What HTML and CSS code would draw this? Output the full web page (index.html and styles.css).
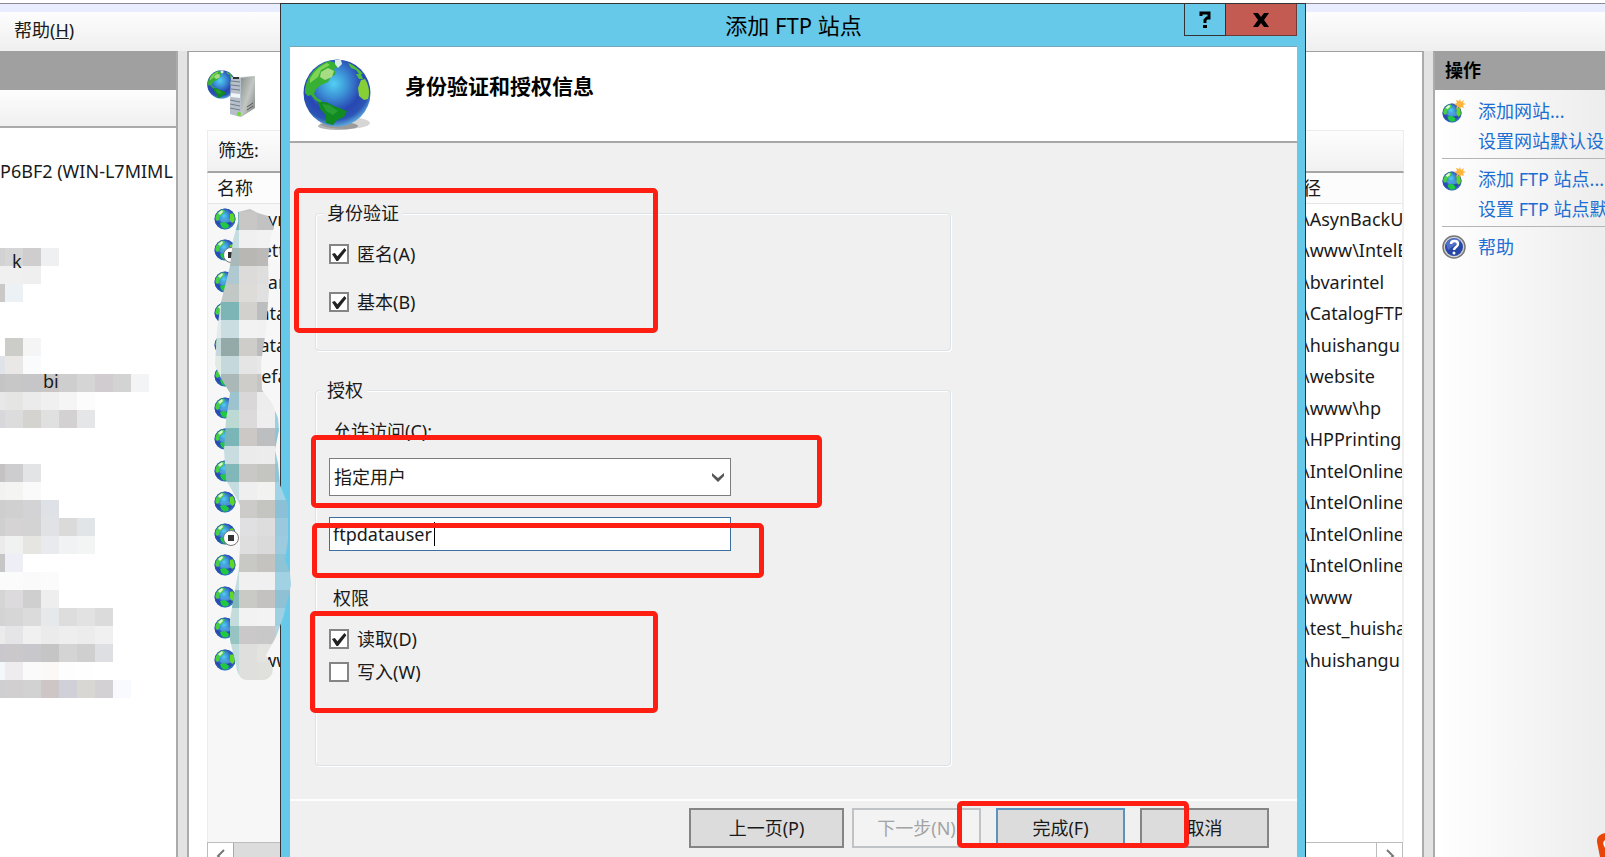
FILE: index.html
```html
<!DOCTYPE html>
<html lang="zh-CN">
<head>
    <meta charset="UTF-8">
    <meta name="viewport" content="width=device-width, initial-scale=1.0">
    <title>添加 FTP 站点</title>
    <link rel="stylesheet" href="styles.css">
</head>
<body>

<!-- Shared icons -->
<svg class="defs" width="0" height="0" aria-hidden="true">
    <defs>
        <radialGradient id="sea" cx="45%" cy="36%" r="64%">
            <stop offset="0" stop-color="#52d0f2"/>
            <stop offset="0.3" stop-color="#3e96d8"/>
            <stop offset="0.65" stop-color="#2846b2"/>
            <stop offset="0.85" stop-color="#2b55b4"/>
            <stop offset="1" stop-color="#5aa6dc"/>
        </radialGradient>
        <linearGradient id="steel" x1="0" y1="0" x2="1" y2="1">
            <stop offset="0" stop-color="#8a908d"/>
            <stop offset="0.5" stop-color="#c3c7c4"/>
            <stop offset="1" stop-color="#7d817e"/>
        </linearGradient>
        <symbol id="globe" viewBox="0 0 68 68">
            <circle cx="34" cy="34" r="33.500" fill="url(#sea)"/>
            <path d="M2 34C2 19 12 7 26 2l6 2 3 4-4 2 2 5-5 3-3 5-7 3-5 4-2 5 3 4 5 3-1 2-6-3-4-5-3 1z" fill="#37b034"/>
            <path d="M7 20C11 12 17 7 24 4l3 2-9 5-3 7-8 6z" fill="#7fd455"/>
            <path d="M18 13l7-4 6 3-2 6-7 3-5-3z" fill="#c3e79a" opacity="0.8"/>
            <path d="M32 1h6l1 4-4 4-3-4z" fill="#dbeee6"/>
            <path d="M45 4c6 2 11 6 15 11l-4 0-3-4-5-2zM53 15l5 0 2 5-4 0z" fill="#4fc03a"/>
            <path d="M58 21l4-1c4 7 5 13 3 20l-4 1-5-4-1-8z" fill="#86cf35"/>
            <path d="M15 43l8 0 8 4 13 5-3 6-7 3-4 5-7-2 0-8-6-6z" fill="#128a22"/>
            <path d="M19 45l7 1 9 6-5 4-7-4z" fill="#2fa637" opacity="0.7"/>
        </symbol>
        <symbol id="globe-small" viewBox="0 0 22 22">
            <circle cx="11" cy="11" r="10.500" fill="url(#sea)"/>
            <path d="M5 11l14-1-2 4-9 1z" fill="#59a9e2" opacity="0.6"/>
            <path d="M1 11C1 6 5 2 9 1l2 2-2 3-3 2-1 4-2 1z" fill="#45cf45"/>
            <path d="M4 5l4-3 1 2-3 3z" fill="#dff6d5"/>
            <path d="M16 6l3-1c2 3 3 6 2 8l-3 2-2-3z" fill="#5ed824"/>
            <path d="M6 15l5-1 4 3-1 3-4 1-3-3z" fill="#1fca41"/>
            <circle cx="11" cy="11" r="10" fill="none" stroke="#2853b2" stroke-width="1" opacity="0.6"/>
        </symbol>
        <symbol id="globe-new" viewBox="0 0 24 24">
            <use href="#globe-small" x="0" y="4" width="20" height="20"/>
            <path d="M18 0l1 3 3-2-1 3 3 1-3 1 1 3-3-1-1 3-1-3-3 2 1-3-3-2 3-1-1-3 3 1z" fill="#fdb53c"/>
        </symbol>
    </defs>
</svg>

<div class="address-bar"></div>
<nav class="menu-bar">
    <a class="menu-item" href="#">帮助(<u>H</u>)</a>
</nav>

<div class="console">
    <aside class="pane connections">
        <div class="pane-title"></div>
        <div class="pane-toolbar"></div>
        <ul class="tree">
            <li>P6BF2 (WIN-L7MIML</li>
            <li></li>
            <li></li>
            <li class="level-1">k</li>
            <li></li>
            <li></li>
            <li></li>
            <li class="level-2">bi</li>
        </ul>
        <svg class="mosaic" id="treeMosaic" aria-hidden="true"></svg>
    </aside>

    <main class="pane sites">
        <svg class="sites-icon" width="50" height="50" viewBox="0 0 50 50">
            <use href="#globe" x="0" y="1" width="29" height="29"/>
            <path d="M24 8l9 0 15-1v32l-14 9-11-3z" fill="#c9cfd2"/>
            <path d="M34 9l14-2v32l-14 9z" fill="url(#steel)"/>
            <path d="M24 8l10 1v39l-11-3z" fill="#b7c0ca"/>
            <path d="M24 12l9 1M24 16l9 1M24 20l9 1M23 31l10 2M23 35l10 2M23 39l10 2" stroke="#6f7d8c" stroke-width="1"/>
            <path d="M24 24l9 1v4l-9-1z" fill="#f0f5f8"/>
            <path d="M26 8l6 0v2l-6 0z" fill="#333"/>
            <circle cx="32" cy="45" r="2" fill="#6fd92c"/>
            <path d="M40 41l6-4M40 38l6-4" stroke="#555" stroke-width="1"/>
        </svg>
        <div class="filter-bar">筛选:</div>
        <div class="list">
            <table class="site-table">
                <thead>
                    <tr><th class="name">名称</th><th class="path">径</th></tr>
                </thead>
                <tbody>
                    <tr><td class="name"><svg><use href="#globe-small"/></svg>Asyn</td><td class="path">\AsynBackU</td></tr>
                    <tr><td class="name stopped"><svg><use href="#globe-small"/></svg>Nett</td><td class="path">\www\IntelB</td></tr>
                    <tr><td class="name"><svg><use href="#globe-small"/></svg>bvar</td><td class="path">\bvarintel</td></tr>
                    <tr><td class="name"><svg><use href="#globe-small"/></svg>Catal</td><td class="path">\CatalogFTP</td></tr>
                    <tr><td class="name"><svg><use href="#globe-small"/></svg>Catal</td><td class="path">\huishangu</td></tr>
                    <tr><td class="name"><svg><use href="#globe-small"/></svg>Defa</td><td class="path">\website</td></tr>
                    <tr><td class="name"><svg><use href="#globe-small"/></svg></td><td class="path">\www\hp</td></tr>
                    <tr><td class="name"><svg><use href="#globe-small"/></svg></td><td class="path">\HPPrinting</td></tr>
                    <tr><td class="name"><svg><use href="#globe-small"/></svg></td><td class="path">\IntelOnlineC</td></tr>
                    <tr><td class="name"><svg><use href="#globe-small"/></svg></td><td class="path">\IntelOnlineC</td></tr>
                    <tr><td class="name stopped"><svg><use href="#globe-small"/></svg></td><td class="path">\IntelOnlineC</td></tr>
                    <tr><td class="name"><svg><use href="#globe-small"/></svg></td><td class="path">\IntelOnlineC</td></tr>
                    <tr><td class="name"><svg><use href="#globe-small"/></svg></td><td class="path">\www</td></tr>
                    <tr><td class="name"><svg><use href="#globe-small"/></svg></td><td class="path">\test_huisha</td></tr>
                    <tr><td class="name"><svg><use href="#globe-small"/></svg>www</td><td class="path">\huishangu</td></tr>
                </tbody>
            </table>
        </div>
        <div class="scrollbar">
            <button class="scroll-button" type="button" aria-label="向左"><svg width="10" height="14" viewBox="0 0 10 14"><path d="M8 1L2 7l6 6"/></svg></button>
            <div class="scroll-thumb"></div>
            <div class="scroll-track"></div>
            <button class="scroll-button" type="button" aria-label="向右"><svg width="10" height="14" viewBox="0 0 10 14"><path d="M2 1l6 6-6 6"/></svg></button>
        </div>
    </main>

    <aside class="pane actions">
        <h2 class="pane-title">操作</h2>
        <ul class="action-list">
            <li><svg><use href="#globe-new"/></svg><a href="#">添加网站...</a></li>
            <li><a href="#">设置网站默认设置...</a></li>
            <li class="divided"><svg><use href="#globe-new"/></svg><a href="#">添加 FTP 站点...</a></li>
            <li><a href="#">设置 FTP 站点默认设置...</a></li>
            <li class="divided">
                <svg viewBox="0 0 24 24">
                    <circle cx="12" cy="12" r="11" fill="#d5d5d5" stroke="#777" stroke-width="1.500"/>
                    <circle cx="12" cy="12" r="9" fill="#2746a8"/>
                    <path d="M4 9a9 9 0 0 1 15-3l-13 9z" fill="#6d8be0" opacity="0.6"/>
                    <path d="M9 9c0-4 7-4 7 0 0 3-4 3-4 6" fill="none" stroke="#fff" stroke-width="2.500"/>
                    <circle cx="12" cy="18" r="1.500" fill="#fff"/>
                </svg>
                <a href="#">帮助</a>
            </li>
        </ul>
        <svg class="corner-badge" width="8" height="24" viewBox="0 0 8 24" aria-hidden="true">
            <path d="M8 0Q-1 2 0 9l3 15h5z" fill="#e8450a"/>
            <path d="M8 7q-3 2-1 6l1 2z" fill="#fff"/>
        </svg>
    </aside>
</div>

<section class="dialog" role="dialog" aria-labelledby="dialogTitle">
    <header class="title-bar">
        <h1 id="dialogTitle">添加 FTP 站点</h1>
        <div class="window-buttons">
            <button class="help-button" type="button" aria-label="帮助"><svg width="12" height="17" viewBox="0 0 12 17"><path d="M2 5V2h8v5H8L6 9v3" fill="none" stroke="#000" stroke-width="3"/><path d="M4 14h4v3H4z"/></svg></button>
            <button class="close-button" type="button" aria-label="关闭"><svg width="16" height="14" viewBox="0 0 16 14"><path d="M0 0h5l3 4 3-4h5l-5 7 5 7h-5l-3-4-3 4H0l5-7z"/></svg></button>
        </div>
    </header>

    <form class="client">
        <div class="page-header">
            <svg class="page-icon" width="70" height="74" viewBox="0 0 70 74">
                <ellipse cx="42" cy="64" rx="25" ry="6" fill="#777" opacity="0.3"/>
                <ellipse cx="35" cy="67" rx="20" ry="4" fill="#444" opacity="0.4"/>
                <use href="#globe" x="0" y="0" width="68" height="68"/>
            </svg>
            <h2>身份验证和授权信息</h2>
        </div>

        <div class="page-body">
            <fieldset class="authentication">
                <legend>身份验证</legend>
                <label class="check"><input type="checkbox" checked>匿名(A)</label>
                <label class="check"><input type="checkbox" checked>基本(B)</label>
            </fieldset>

            <fieldset class="authorization">
                <legend>授权</legend>
                <label class="caption" for="access">允许访问(C):</label>
                <div class="select-box">
                    <select id="access">
                        <option>指定用户</option>
                    </select>
                    <svg width="12" height="10" viewBox="0 0 12 10"><path d="M0 1l6 5 6-5v3L6 10 0 4z"/></svg>
                </div>
                <div class="text-box">
                    <input type="text" value="ftpdatauser" aria-label="用户">
                    <span class="caret"></span>
                </div>
                <p class="caption">权限</p>
                <label class="check"><input type="checkbox" checked>读取(D)</label>
                <label class="check"><input type="checkbox">写入(W)</label>
            </fieldset>
        </div>

        <footer class="page-footer">
            <button class="previous" type="button">上一页(P)</button>
            <button class="next" type="button" disabled>下一步(N)</button>
            <button class="finish" type="button">完成(F)</button>
            <button class="cancel" type="button">取消</button>
        </footer>
    </form>

    <!-- Red marker frames -->
    <div class="marker marker-auth"></div>
    <div class="marker marker-access"></div>
    <div class="marker marker-user"></div>
    <div class="marker marker-rights"></div>
    <div class="marker marker-finish"></div>
</section>

<svg class="mosaic names-mosaic" id="nameMosaic" aria-hidden="true">
    <clipPath id="brush">
        <path d="M238 212V222L233 240 230 266 221 302 217 330 215 365 222 380 230 393 226 420 224 450 226 480 233 492 240 505V545L239 568 234 595 230 620V640L236 665Q238 680 247 680H264Q273 678 273 668L266 655 276 637 283 618 291 585 290 573 285 560 288 540V505L280 485 278 463 275 450 279 430 278 418 272 403 262 390 261 363 266 330 269 290 268 260 271 235 274 228 268 216 258 213 250 209z"/>
    </clipPath>
</svg>

<script src="script.js"></script>
</body>
</html>
```
FILE: styles.css
```css
* {
    box-sizing: border-box;
}
body {
    margin: 0;
    height: 100vh;
    display: flex;
    flex-direction: column;
    position: relative;
    overflow: hidden;
    background: #e3e3e3;
    color: #1a1a1a;
    font-family: "Noto Sans", "Noto Sans CJK SC", sans-serif;
    font-size: 18px;
    line-height: 24px;
}
h1, h2, p, ul {
    margin: 0;
    padding: 0;
    font-weight: normal;
}
ul {
    list-style: none;
}
button, input, select {
    font: inherit;
    color: inherit;
    border-radius: 0;
}
.defs {
    position: absolute;
}

/* Main window */
.address-bar {
    height: 12px;
    flex: none;
    background: linear-gradient(#fff 3px, #8b8b93 3px, #8b8b93 4px, #e8eeff 4px);
}
.menu-bar {
    height: 39px;
    flex: none;
    padding: 6px 14px;
    background: linear-gradient(#fdfdfd, #efefef);
}
.menu-item {
    color: #1a1a1a;
    text-decoration: none;
}
.console {
    flex: 1;
    min-height: 0;
    display: flex;
    gap: 9px;
}
.pane {
    position: relative;
    background: #fff;
    border-top: 1px solid #a0a0a0;
    overflow: hidden;
}
.pane-title {
    height: 38px;
    padding: 6px 10px;
    background: #a0a0a0;
    color: #000;
    font-size: 18px;
    font-weight: bold;
}

/* Connections tree */
.connections {
    width: 178px;
    flex: none;
    border-right: 2px solid #ababab;
}
.pane-toolbar {
    height: 38px;
    background: linear-gradient(#fdfdfd, #f0f0f0);
    border-bottom: 2px solid #ababab;
}
.tree {
    position: relative;
    z-index: 1;
    padding-top: 28px;
    white-space: nowrap;
}
.tree li {
    height: 30px;
    line-height: 30px;
}
.tree .level-1 {
    padding-left: 12px;
}
.tree .level-2 {
    padding-left: 43px;
}
.mosaic {
    position: absolute;
    left: 0;
    top: 0;
    width: 300px;
    height: 100%;
    pointer-events: none;
}
.connections .mosaic {
    top: -52px;
    height: 720px;
}

/* Sites list */
.sites {
    flex: 1;
    display: flex;
    flex-direction: column;
    padding: 17px 18px 0;
    border-left: 2px solid #ababab;
    border-right: 2px solid #ababab;
}
.sites-icon {
    flex: none;
}
.filter-bar {
    height: 43px;
    flex: none;
    margin-top: 11px;
    padding: 7px 10px;
    background: linear-gradient(#fdfdfd, #f1f1f1);
    border: 1px solid #ececec;
    border-bottom: 2px solid #a5a5a5;
}
.list {
    flex: 1;
    min-height: 0;
    overflow: hidden;
    background: linear-gradient(to right, #f7f7f7 400px, #fff 400px);
    border-left: 1px solid #ececec;
    border-right: 2px solid #f0f0f0;
}
.site-table {
    width: 100%;
    table-layout: fixed;
    border-collapse: collapse;
}
.site-table th {
    height: 30px;
    padding: 0;
    background: #fcfcfc;
    border-bottom: 1px solid #e5e5e5;
    font-weight: normal;
    text-align: left;
}
.site-table td {
    height: 32px;
    padding: 0;
    line-height: 31px;
    white-space: nowrap;
    overflow: hidden;
}
.site-table tr:nth-child(even) td {
    height: 31px;
}
.site-table th.name {
    padding-left: 9px;
}
.site-table td.name {
    position: relative;
    padding-left: 6px;
}
.site-table .path {
    width: 99px;
}
.site-table svg {
    width: 22px;
    height: 22px;
    margin-right: 12px;
    margin-bottom: 4px;
    vertical-align: middle;
}
/* Small stop sign over the globe */
.stopped::after {
    content: "";
    position: absolute;
    left: 15px;
    top: 12px;
    width: 14px;
    height: 14px;
    border: 1px solid #777;
    border-radius: 50%;
    background: linear-gradient(#333, #333) center / 6px 6px no-repeat #fff;
}
.scrollbar {
    height: 27px;
    flex: none;
    margin-right: 1px;
    margin-bottom: -12px;
    display: flex;
    background: #fff;
    border: 1px solid #bcbcbc;
}
.scroll-button {
    width: 25px;
    padding: 0;
    border: 0;
    background: #fff;
}
.scroll-button path {
    fill: none;
    stroke: #777;
    stroke-width: 2;
}
.scroll-thumb {
    width: 70%;
    background: #dcdcdc;
    border: 1px solid #a9a9a9;
    border-top: 0;
}
.scroll-track {
    flex: 1;
    border-right: 1px solid #bcbcbc;
}

/* Actions */
.actions {
    width: 172px;
    flex: none;
    border-left: 2px solid #ababab;
    background: linear-gradient(to right, #fff, #ededed);
}
.action-list {
    padding: 6px 0 0 7px;
}
.action-list li {
    height: 30px;
    padding-left: 36px;
    display: flex;
    align-items: center;
    position: relative;
    white-space: nowrap;
}
.action-list li.divided {
    height: 36px;
    margin-top: 2px;
    padding-top: 5px;
    border-top: 1px solid #b5b5b5;
}
.action-list svg {
    width: 24px;
    height: 24px;
    flex: none;
    margin: 0 12px 0 -36px;
}
.action-list a {
    color: #1c6fd2;
    text-decoration: none;
}
.corner-badge {
    position: absolute;
    right: 0;
    bottom: 0;
}

/* Dialog window */
.dialog {
    position: absolute;
    left: 280px;
    right: 299px;
    top: 3px;
    bottom: 0;
    display: flex;
    flex-direction: column;
    padding: 0 8px 0 9px;
    background: #66c9ea;
    border: 1px solid #333;
    border-bottom: 0;
}
.title-bar {
    height: 43px;
    flex: none;
    display: grid;
    grid-template-columns: 113px 1fr 113px;
    border-bottom: 1px solid #79a7b8;
}
.title-bar h1 {
    grid-column: 2;
    color: #000;
    font-size: 22px;
    line-height: 42px;
    text-align: center;
}
.window-buttons {
    height: 32px;
    display: flex;
}
.window-buttons button {
    padding: 0;
    display: flex;
    align-items: center;
    justify-content: center;
    border: 1px solid #333;
    border-top: 0;
}
.help-button {
    width: 42px;
    background: #66c9ea;
}
.window-buttons .close-button {
    width: 71px;
    background: #c45b52;
    border-color: #6d3a37;
    border-left: 0;
}
.client {
    flex: 1;
    min-height: 0;
    display: flex;
    flex-direction: column;
    background: #f0f0f0;
}
.page-header {
    height: 96px;
    flex: none;
    display: flex;
    gap: 32px;
    padding: 12px 13px;
    background: #fff;
    border-bottom: 2px solid #a8a8a8;
}
.page-header h2 {
    padding-top: 15px;
    color: #000;
    font-size: 21px;
    font-weight: bold;
}
.page-body {
    flex: 1;
    min-height: 0;
    padding: 58px 25px 0;
}
fieldset {
    width: 636px;
    max-width: 100%;
    margin: 0 0 27px;
    padding: 16px 13px 0;
    border: 1px solid #d9e3e9;
    border-radius: 4px;
    box-shadow: 1px 1px 0 #fff, inset 1px 1px 0 #fff;
}
legend {
    margin-left: -6px;
    padding: 0 4px;
    background: #f0f0f0;
}
.authentication {
    height: 150px;
}
.authorization {
    height: 388px;
    padding-top: 17px;
}
.check {
    display: flex;
    align-items: center;
    gap: 8px;
    width: max-content;
}
.authentication .check {
    margin: 1px 0 24px;
}
.authorization .check {
    margin-bottom: 9px;
}
.check input {
    appearance: none;
    width: 20px;
    height: 20px;
    margin: 0;
    background: #fff;
    border: 2px solid #858585;
}
.check input:checked::before {
    content: "";
    display: block;
    width: 16px;
    height: 16px;
    background: #222;
    clip-path: polygon(6% 50%, 24% 44%, 40% 64%, 84% 12%, 96% 26%, 44% 94%, 34% 94%);
}
.caption {
    display: block;
    padding-left: 4px;
}
.select-box, .text-box {
    position: relative;
    width: 402px;
    max-width: 100%;
}
.select-box {
    margin: 15px 0 21px;
}
.select-box select {
    appearance: none;
    display: block;
    width: 100%;
    height: 38px;
    padding: 0 4px;
    background: #fff;
    border: 1px solid #7d7d7d;
    outline: 0;
}
.select-box svg {
    position: absolute;
    right: 7px;
    top: 14px;
    fill: #555;
}
.text-box {
    margin-bottom: 35px;
}
.text-box input {
    display: block;
    width: 100%;
    height: 34px;
    padding: 0 3px;
    background: #fff;
    border: 1px solid #3a6f9f;
    outline: 0;
}
.caret {
    position: absolute;
    left: 105px;
    top: 5px;
    width: 1px;
    height: 24px;
    background: #000;
}
p.caption {
    margin-bottom: 17px;
}
.page-footer {
    height: 58px;
    flex: none;
    display: flex;
    justify-content: flex-end;
    align-items: flex-start;
    padding: 7px 28px 0;
    border-top: 2px solid #fdfdfd;
}
.page-footer button {
    width: 129px;
    height: 40px;
    padding: 0;
    margin-left: 15px;
    background: #dcdcdc;
    border: 2px solid #858585;
}
.page-footer .previous {
    width: 155px;
}
.page-footer .next {
    margin-left: 8px;
    background: #f3f3f3;
    border-color: #bfc3c5;
    color: #a3a3a3;
}
.page-footer .finish {
    border-color: #5a93bd;
}

/* Marker frames over the dialog */
.marker {
    position: absolute;
    border: 5px solid #ff1f12;
    border-radius: 5px;
    pointer-events: none;
}
.marker-auth {
    left: 13px;
    top: 184px;
    width: 364px;
    height: 145px;
}
.marker-access {
    left: 30px;
    top: 431px;
    width: 511px;
    height: 73px;
}
.marker-user {
    left: 31px;
    top: 519px;
    width: 452px;
    height: 55px;
}
.marker-rights {
    left: 29px;
    top: 607px;
    width: 348px;
    height: 102px;
}
.marker-finish {
    right: 116px;
    bottom: 9px;
    width: 232px;
    height: 47px;
}
```
FILE: script.js
```js
// Blurred-out areas: each entry is [row, first column, colours of the cells]
const CELL = 18;

const treeCells = [
    [0, 0, 'd3d2d2 d6d6d6 cfcdce eff0f2'],
    [1, 0, 'f0f0f0 f0f0f0 efefef'],
    [2, 0, 'cac9c8 ecf1f6'],
    [5, 1, 'cccdc8 f5f5f5'],
    [6, 0, 'e0e4e8 e9e8e7 fafbfd'],
    [7, 0, 'c5c4c4 c8c7c7 c6c6c8 c9c6c5 cfcecf d4d5d4 d0cccf d3d3d3 f3f4f6'],
    [8, 0, 'e8e8e8 e5e5e3 ebebeb f0f0f0 f5f5f5 fcfcfc'],
    [9, 0, 'd8d8dc dcdcdc d4d3d0 e0e0e0 d3d1d2 e4e6e8'],
    [12, 0, 'c5c2c4 cdcdcf e2e4e6'],
    [13, 0, 'f2f2f0 f4f4f2 fafafa'],
    [14, 0, 'cecece d0d0d0 d3d2d4 dee1e5'],
    [15, 0, 'd0d0d0 d6d3d4 d4d3d3 e0e2e6 dadada e2e5e7'],
    [16, 0, 'ebebeb f0f1f1 e6e5e2 e8eaed f1f2f4 f3f5f5'],
    [17, 0, 'c6c6c6 eeeff6'],
    [18, 0, 'fbfbfb fbfbfb fafafa fbfbfb'],
    [19, 0, 'd5d5d5 dcdadc cfcfd0 eeeeee'],
    [20, 0, 'd3d3d3 d7d6d7 dcdbdc e6e9ec dddddd e2e2e2 dbdbdb'],
    [21, 0, 'ebebec e5e5e7 f0f0f0 ebebeb eeeeee ececec f0f0f0'],
    [22, 0, 'cac7cc cbc8cc c8c7cb c5c5c5 d4d4d4 cfcfcf dedfe3'],
    [23, 0, 'f5f8fa efecef fafafa fbf8f6 fdfdfd fefefe'],
    [24, 0, 'cfced2 d1cfd0 d2d2d2 cec6c6 d0d1d8 d8d7d4 d3d1d3 f9fafd']
];

const nameCells = [
    [-3, 13, '8fbab5 c5c3c1 c5c4c3'],
    [-2, 13, '80b5b8 c8c7c5 c2c2c2'],
    [-1, 13, 'c5dce0 f0f0f0 f2f2f2'],
    [0, 13, 'a9b8b8 b8b7b4 bbbab8'],
    [1, 13, 'b0c8cf dddbda dfdedf'],
    [2, 13, 'c2c8c6 dddcd9 e0e0e0'],
    [3, 12, 'cadde0 7db5b7 d2d1ce bcbdbf'],
    [4, 12, 'e3ebec cadde0 f2f2f2 f1f1f1'],
    [5, 12, 'c5d9dd 94aaa8 cecdc9 bcbcbe'],
    [6, 12, 'e0ebe6 c5d9dd e5e5e5 e8e8e8'],
    [7, 12, 'e0ebe6 aab9b7 cecdc9 c5c5c5'],
    [8, 13, '9dc3cf d9d7d8 ededed eeeeee'],
    [9, 13, 'bcd9d4 dcdada eeeeee 9ad0e2'],
    [10, 13, '7ab5b7 ccc8c5 bdbec0 8cc4d8'],
    [11, 13, 'c9dde0 ebebeb ececec 9ad0e2'],
    [12, 13, '80b7b8 c9c8c6 c4c4c0 90c4d8'],
    [13, 13, 'c5dde0 efefef f2f2f0 9fd3e5'],
    [14, 13, 'c5dde0 cccbca c4c4c1 8cc0d6'],
    [15, 13, 'e0e0e0 e0dfe1 dddddd 9ac8dc'],
    [16, 13, 'e0e0e0 dedede dadada 9ccade'],
    [17, 13, 'c5dde0 c8c8c5 c4c3c0 8fc3d6'],
    [18, 13, 'c5dde0 f0f0f0 f0f0f0 a0d2e4'],
    [19, 13, '80b7b8 c9c9c6 c3c2c1 90c0d4'],
    [20, 13, 'c5dcdc f2f2f2 f3f3f3 9cd0e2'],
    [21, 13, '96c4c2 cac8c8 c8c8c8 b0d5e0'],
    [22, 13, 'c0dcdc dfdfdd e3e3e0 e5e5e5'],
    [23, 13, 'c5dcdc dfdfdd e0e0dd e5e5e5']
];

function drawMosaic(svg, cells, clip) {
    const ns = 'http://www.w3.org/2000/svg';
    const group = document.createElementNS(ns, 'g');
    group.setAttribute('shape-rendering', 'crispEdges');
    if (clip) {
        group.setAttribute('clip-path', clip);
    }
    cells.forEach(([row, col, colours]) => {
        colours.split(' ').forEach((colour, i) => {
            const rect = document.createElementNS(ns, 'rect');
            rect.setAttribute('x', (col + i) * CELL - 13);
            rect.setAttribute('y', row * CELL + 248);
            rect.setAttribute('width', CELL);
            rect.setAttribute('height', CELL);
            rect.setAttribute('fill', '#' + colour);
            group.appendChild(rect);
        });
    });
    svg.appendChild(group);
}

drawMosaic(document.getElementById('treeMosaic'), treeCells);
drawMosaic(document.getElementById('nameMosaic'), nameCells, 'url(#brush)');
```
